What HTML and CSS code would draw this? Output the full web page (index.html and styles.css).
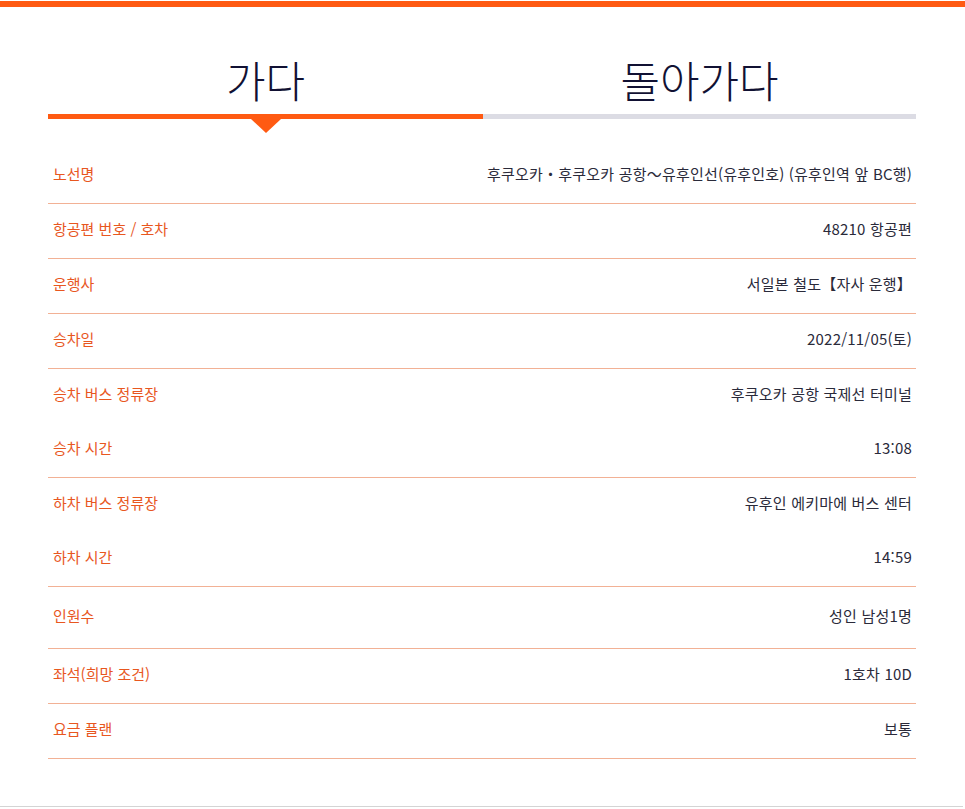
FILE: index.html
```html
<!DOCTYPE html>
<html lang="ko">
<head>
<meta charset="utf-8">
<title>승차 정보</title>
<link rel="stylesheet" href="styles.css">
</head>
<body>
<div class="topbar"></div>
<main class="wrap">
  <nav class="tabs">
    <div class="tab active">가다</div>
    <div class="tab">돌아가다</div>
  </nav>
  <div class="rows">
    <div class="row"><span class="label">노선명</span><span class="value">후쿠오카・후쿠오카 공항～유후인선(유후인호) (유후인역 앞 BC행)</span></div>
    <div class="row"><span class="label">항공편 번호 / 호차</span><span class="value">48210 항공편</span></div>
    <div class="row"><span class="label">운행사</span><span class="value">서일본 철도【자사 운행】</span></div>
    <div class="row"><span class="label">승차일</span><span class="value">2022/11/05(토)</span></div>
    <div class="row plain"><span class="label">승차 버스 정류장</span><span class="value">후쿠오카 공항 국제선 터미널</span></div>
    <div class="row"><span class="label">승차 시간</span><span class="value">13:08</span></div>
    <div class="row plain"><span class="label">하차 버스 정류장</span><span class="value">유후인 에키마에 버스 센터</span></div>
    <div class="row"><span class="label">하차 시간</span><span class="value">14:59</span></div>
    <div class="row tall"><span class="label">인원수</span><span class="value">성인 남성1명</span></div>
    <div class="row"><span class="label">좌석(희망 조건)</span><span class="value">1호차 10D</span></div>
    <div class="row"><span class="label">요금 플랜</span><span class="value">보통</span></div>
  </div>
</main>
<div class="bottomline"></div>
</body>
</html>
```
FILE: styles.css
```css
html, body {
  margin: 0;
  padding: 0;
  background: #ffffff;
}
body {
  font-family: "Noto Sans CJK KR", "Noto Sans", sans-serif;
  width: 965px;
  height: 809px;
  position: relative;
  overflow: hidden;
}
.topbar {
  margin-top: 1px;
  height: 6px;
  background: #ff5a12;
}
.wrap {
  width: 868px;
  margin: 0 0 0 48px;
}
.tabs {
  display: grid;
  grid-template-columns: 435px 433px;
  margin-top: 46px;
}
.tab {
  position: relative;
  text-align: center;
  font-size: 43px;
  line-height: 52px;
  height: 61px;
  font-weight: 300;
  color: #111133;
  border-bottom: 5px solid #dcdce4;
}
.tab.active {
  border-bottom-color: #ff5a12;
}
.tab.active::after {
  content: "";
  position: absolute;
  left: 50%;
  bottom: -19px;
  margin-left: -15px;
  border-left: 15px solid transparent;
  border-right: 15px solid transparent;
  border-top: 14px solid #ff5a12;
}
.rows {
  margin-top: 30px;
}
.row {
  display: flex;
  justify-content: space-between;
  align-items: center;
  height: 54px;
  padding: 0 4px 0 5px;
  border-bottom: 1px solid #f2b195;
  font-size: 15px;
}
.row.plain {
  border-bottom: none;
}
.row.tall {
  height: 61px;
}
.label,
.value {
  margin-bottom: 5px;
}
.label {
  color: #e8571f;
}
.value {
  color: #2a2a3a;
  letter-spacing: 0.2px;
}
.bottomline {
  position: absolute;
  left: 0;
  right: 2px;
  top: 806px;
  height: 1px;
  background: #d4d4d4;
}
```
